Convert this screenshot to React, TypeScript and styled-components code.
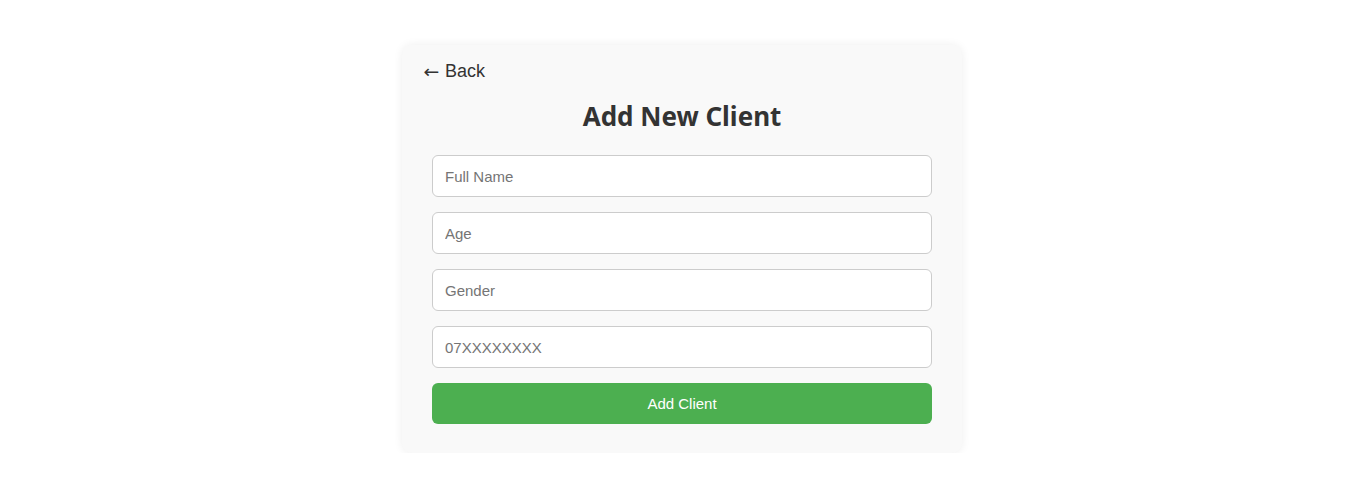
import React from "react";
import styled, { createGlobalStyle } from "styled-components";

const GlobalStyle = createGlobalStyle`
  * { box-sizing: border-box; }
  body {
    margin: 0;
    background: #ffffff;
    font-family: "Liberation Sans", Arial, sans-serif;
    color: #333;
  }
`;

const Page = styled.div`
  display: flex;
  justify-content: center;
  padding-top: 45px;
`;

const Card = styled.div`
  width: 560px;
  background: #f9f9f9;
  border-radius: 10px;
  box-shadow: 0 0 10px rgba(0, 0, 0, 0.07);
  padding: 16px 20px 29px;
`;

const BackButton = styled.button`
  background: none;
  border: none;
  padding: 0 0 0 2px;
  font-family: "Liberation Sans", Arial, sans-serif;
  font-size: 18px;
  color: #333;
  cursor: pointer;
  line-height: 21px;
  display: flex;
  align-items: center;
  gap: 6px;
`;

const Arrow = styled.span`
  font-family: "DejaVu Sans", sans-serif;
  font-size: 18px;
  display: inline-block;
  transform: scaleX(1.05);
`;

const Title = styled.h2`
  margin: 17px 0 22px;
  text-align: center;
  font-family: "Noto Sans", "Open Sans", sans-serif;
  font-weight: 700;
  font-size: 26px;
  line-height: 34px;
  color: #333;
`;

const Form = styled.form`
  display: flex;
  flex-direction: column;
  gap: 15px;
  padding: 0 10px;
`;

const Input = styled.input`
  height: 42px;
  width: 100%;
  padding: 0 12px;
  border: 1px solid #ccc;
  border-radius: 6px;
  background: #fff;
  font-family: "Liberation Sans", Arial, sans-serif;
  font-size: 15px;
  color: #333;
  outline: none;

  &::placeholder {
    color: #757575;
  }
`;

const Submit = styled.button`
  height: 41px;
  width: 100%;
  border: none;
  border-radius: 6px;
  background: #4caf50;
  color: #fff;
  font-family: "Liberation Sans", Arial, sans-serif;
  font-size: 15px;
  cursor: pointer;
`;

export default function App() {
  return (
    <>
      <GlobalStyle />
      <Page>
        <Card>
          <BackButton type="button">
            <Arrow>←</Arrow>Back
          </BackButton>
          <Title>Add New Client</Title>
          <Form onSubmit={(e) => e.preventDefault()}>
            <Input placeholder="Full Name" />
            <Input placeholder="Age" />
            <Input placeholder="Gender" />
            <Input type="tel" placeholder="07XXXXXXXX" />
            <Submit type="submit">Add Client</Submit>
          </Form>
        </Card>
      </Page>
    </>
  );
}
